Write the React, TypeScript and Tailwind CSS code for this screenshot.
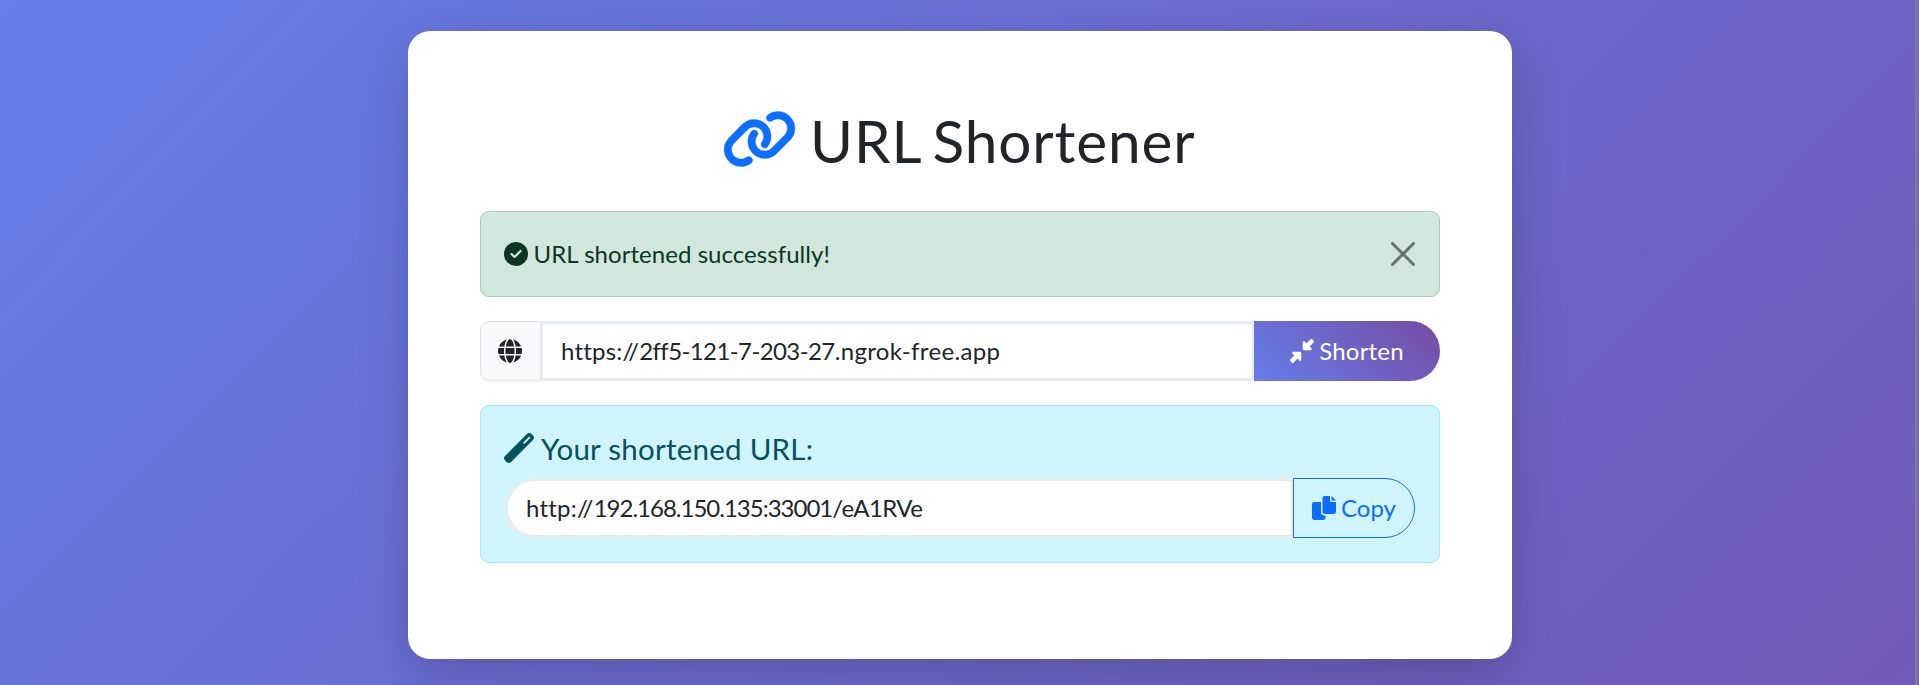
import { FaCircleCheck, FaGlobe, FaDownLeftAndUpRightToCenter } from "react-icons/fa6";

function LinkIcon() {
  return (
    <svg
      viewBox="0 0 640 512"
      className="h-[60px] w-[75px] shrink-0 text-[#0d6efd]"
      fill="currentColor"
      stroke="currentColor"
      strokeWidth="3"
    >
      <path d="M172.5 131.1C228.1 75.51 320.5 75.51 376.1 131.1C426.1 181.1 433.5 260.8 392.4 318.3L391.3 319.9C381 334.2 361 337.6 346.7 327.3C332.3 317 328.9 297 339.2 282.7L340.3 281.1C363.2 249 359.6 205.1 331.7 177.2C300.3 145.8 249.2 145.8 217.7 177.2L105.5 289.5C73.99 320.1 73.99 372 105.5 403.5C133.3 431.4 177.3 435 209.3 412.1L210.9 410.1C225.3 400.7 245.3 404 255.5 418.4C265.8 432.8 262.5 452.8 248.1 463.1L246.5 464.2C188.1 505.3 110.2 498.7 60.21 448.8C3.741 392.3 3.741 300.7 60.21 244.3L172.5 131.1zM467.5 380C411 436.5 319.5 436.5 263 380C213 330 206.5 251.2 247.6 193.7L248.7 192.1C258.1 177.8 278.1 174.4 293.3 184.7C307.7 194.1 311.1 214.1 300.8 229.3L299.7 230.9C276.8 262.1 280.4 306.9 308.3 334.8C339.7 366.2 390.8 366.2 422.3 334.8L534.5 222.5C566 191 566 139.1 534.5 108.5C506.7 80.63 462.7 76.99 430.7 99.9L429.1 101C414.7 111.3 394.7 107.1 384.5 93.58C374.2 79.2 377.5 59.21 391.9 48.94L393.5 47.82C451 6.731 529.8 13.25 579.8 63.24C636.3 119.7 636.3 211.3 579.8 267.7L467.5 380z" />
    </svg>
  );
}

function CopyIcon() {
  return (
    <svg viewBox="0 0 512 512" className="size-6 shrink-0" fill="currentColor">
      <path d="M384 96V0H272c-26.5 0-48 21.5-48 48v288c0 26.5 21.5 48 48 48h192c26.5 0 48-21.5 48-48V128h-95.1C398.4 128 384 113.6 384 96zM416 0v96h96L416 0zM192 352V128H48c-26.5 0-48 21.5-48 48v288c0 26.5 21.5 48 48 48h192c26.5 0 48-21.5 48-48v-48h-32c-35.3 0-64-28.7-64-64z" />
    </svg>
  );
}

function WandIcon() {
  return (
    <svg viewBox="0 0 512 512" className="size-[30px] shrink-0" fill="currentColor">
      <path
        fillRule="evenodd"
        d="M14.1 463.3c-18.7-18.7-18.7-49.1 0-67.9L395.4 14.1c18.7-18.7 49.1-18.7 67.9 0l34.6 34.6c18.7 18.7 18.7 49.1 0 67.9L116.5 497.9c-18.7 18.7-49.1 18.7-67.9 0L14.1 463.3zM347.6 187.6l105-105L429.4 59.3l-105 105 23.2 23.3z"
      />
    </svg>
  );
}

function CloseIcon() {
  return (
    <svg viewBox="0 0 16 16" className="size-6" fill="#000">
      <path d="M.293.293a1 1 0 0 1 1.414 0L8 6.586 14.293.293a1 1 0 1 1 1.414 1.414L9.414 8l6.293 6.293a1 1 0 0 1-1.414 1.414L8 9.414l-6.293 6.293a1 1 0 0 1-1.414-1.414L6.586 8 .293 1.707a1 1 0 0 1 0-1.414z" />
    </svg>
  );
}

export default function App() {
  return (
    <div className="flex h-[685px] overflow-hidden bg-[linear-gradient(135deg,#667eea_0%,#764ba2_100%)] bg-[length:100%_1700px] bg-no-repeat font-[Lato,sans-serif] text-2xl leading-9 font-normal text-[#212529] [font-variant-ligatures:none]">
      <div className="flex flex-1 items-start justify-center pt-[31px] pl-[5px]">
        <main className="h-[628px] w-[1104px] rounded-[22px] bg-white px-[72px] pt-[72px] shadow-[0_15px_52px_rgba(0,0,0,0.2)]">
          <h1 className="mb-9 flex h-[72px] items-center pl-[242px] text-[58.5px] leading-[72px]">
            <LinkIcon />
            <span className="ml-[13px] pt-[2px] tracking-[0.9px] whitespace-nowrap [word-spacing:-4px]">
              URL Shortener
            </span>
          </h1>

          <div className="flex h-[86px] items-center rounded-[9px] border border-[#a3cfbb] bg-[#d1e7dd] pr-6 pl-[23px] text-[#0a3622]">
            <FaCircleCheck className="mr-[5.5px] size-6 shrink-0" />
            <span className="tracking-[0.05px]">URL shortened successfully!</span>
            <button className="ml-auto opacity-50" aria-label="Close">
              <CloseIcon />
            </button>
          </div>

          <div className="mt-6 flex h-[60px]">
            <span className="flex w-[60px] items-center justify-center rounded-l-[9px] border border-r-0 border-[#dee2e6] bg-[#f8f9fa] pr-px">
              <FaGlobe className="size-6" />
            </span>
            <div className="flex flex-1 items-center border-[3px] border-r-2 border-[#e9ecef] bg-white px-[18px]">
              <span className="whitespace-nowrap">
                <span className="tracking-[0.2px]">https://</span>
                <span className="tracking-[-0.6px]">2ff5-121-7-203-27</span>
                <span className="tracking-[0.35px]">.ngrok-free.app</span>
              </span>
            </div>
            <button className="flex w-[186px] items-center justify-center rounded-r-[30px] bg-[linear-gradient(45deg,#667eea,#764ba2)] text-white">
              <FaDownLeftAndUpRightToCenter className="mr-[5px] size-6" />
              <span className="tracking-[0.2px]">Shorten</span>
            </button>
          </div>

          <section className="mt-6 h-[158px] rounded-[9px] border border-[#9eeaf9] bg-[#cff4fc] px-6 pt-6">
            <h5 className="mb-3 -ml-[0.6px] flex h-9 items-center text-[29.5px] leading-9 text-[#055160]">
              <WandIcon />
              <span className="ml-[6.6px] pt-px tracking-[0.25px]">Your shortened URL:</span>
            </h5>
            <div className="flex h-[60px]">
              <div className="flex flex-1 items-center rounded-l-[30px] border-[3px] border-r-2 border-[#e9ecef] bg-white pl-[18px]">
                <span className="whitespace-nowrap">
                  <span className="tracking-[0.2px]">http://</span>
                  <span className="tracking-[-1px]">192.168.150.135:33001</span>
                  <span className="tracking-[-0.6px]">/eA1RVe</span>
                </span>
              </div>
              <button className="flex w-[122px] items-center justify-center rounded-r-[30px] border border-[#0d6efd] text-[#0d6efd]">
                <CopyIcon />
                <span className="ml-[5px]">Copy</span>
              </button>
            </div>
          </section>
        </main>
      </div>
      <div className="mr-px w-[3px] bg-[#7b7b95]" />
    </div>
  );
}
